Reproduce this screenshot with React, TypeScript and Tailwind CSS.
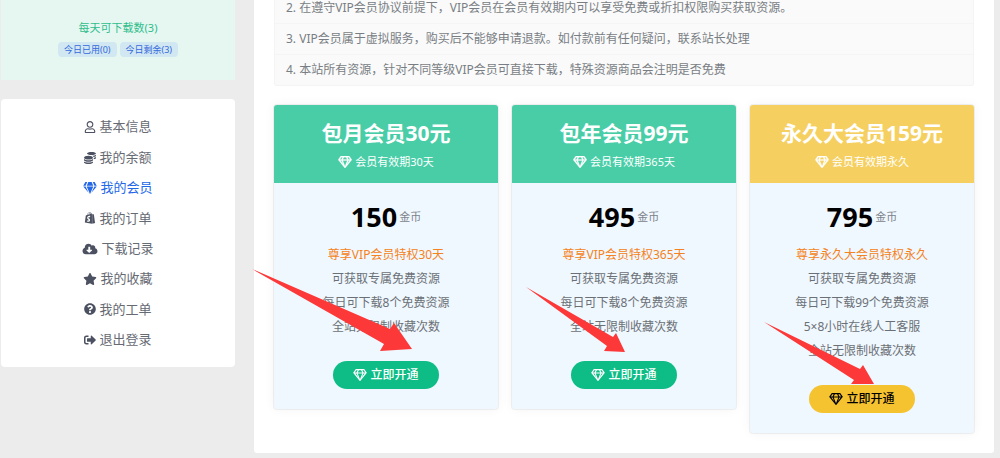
import React from "react";
import clsx from "clsx";
import { IconType } from "react-icons";
import {
  FaCloudDownloadAlt,
  FaCoins,
  FaGem,
  FaQuestionCircle,
  FaRegGem,
  FaRegUser,
  FaShopify,
  FaSignOutAlt,
  FaStar,
} from "react-icons/fa";

type Plan = {
  title: string;
  period: string;
  price: number;
  highlight: string;
  features: string[];
  gold?: boolean;
  arrow: { box: string; width: number; height: number; points: string };
};

const menu: { label: string; icon: IconType; size: string; active?: boolean }[] = [
  { label: "基本信息", icon: FaRegUser, size: "h-3 w-3" },
  { label: "我的余额", icon: FaCoins, size: "h-3 w-3" },
  { label: "我的会员", icon: FaGem, size: "h-3 w-3.5", active: true },
  { label: "我的订单", icon: FaShopify, size: "h-3 w-3" },
  { label: "下载记录", icon: FaCloudDownloadAlt, size: "h-3 w-4" },
  { label: "我的收藏", icon: FaStar, size: "h-3 w-3.5" },
  { label: "我的工单", icon: FaQuestionCircle, size: "h-3 w-3" },
  { label: "退出登录", icon: FaSignOutAlt, size: "h-3 w-3" },
];

const rules = [
  "2. 在遵守VIP会员协议前提下，VIP会员在会员有效期内可以享受免费或折扣权限购买获取资源。",
  "3. VIP会员属于虚拟服务，购买后不能够申请退款。如付款前有任何疑问，联系站长处理",
  "4. 本站所有资源，针对不同等级VIP会员可直接下载，特殊资源商品会注明是否免费",
];

const plans: Plan[] = [
  {
    title: "包月会员30元",
    period: "会员有效期30天",
    price: 150,
    highlight: "尊享VIP会员特权30天",
    features: ["可获取专属免费资源", "每日可下载8个免费资源", "全站无限制收藏次数"],
    arrow: {
      box: "-left-[22px] top-[164px]",
      width: 160,
      height: 83,
      points: "0,0 138,60 142,54 160,80 128,82 132,75",
    },
  },
  {
    title: "包年会员99元",
    period: "会员有效期365天",
    price: 495,
    highlight: "尊享VIP会员特权365天",
    features: ["可获取专属免费资源", "每日可下载8个免费资源", "全站无限制收藏次数"],
    arrow: {
      box: "left-[14px] top-[182px]",
      width: 100,
      height: 66,
      points: "0,0 87,50 90,46 99,65 78,64 81,59",
    },
  },
  {
    title: "永久大会员159元",
    period: "会员有效期永久",
    price: 795,
    highlight: "尊享永久大会员特权永久",
    features: [
      "可获取专属免费资源",
      "每日可下载99个免费资源",
      "5×8小时在线人工客服",
      "全站无限制收藏次数",
    ],
    gold: true,
    arrow: {
      box: "left-[14px] top-[217px]",
      width: 111,
      height: 63,
      points: "0,0 96,47 99,43 110,62 87,62 90,58",
    },
  },
];

function Sidebar() {
  return (
    <aside className="flex flex-col gap-[19px]">
      <div className="flex h-20 flex-col items-center bg-[#e6f7f1] pt-5">
        <p className="text-[11px] leading-4 text-[#2fbd8c]">每天可下载数(3)</p>
        <div className="mt-1.5 flex gap-[3px] text-[9px] leading-[15px] text-[#3469dc]">
          <span className="rounded-sm bg-[#d1e8f2] px-1.5">今日已用(0)</span>
          <span className="rounded-sm bg-[#d1e8f2] px-1.5">今日剩余(3)</span>
        </div>
      </div>

      <nav className="flex h-[268px] flex-col rounded-sm bg-white pt-[13px] pb-3">
        {menu.map(({ label, icon: Icon, size, active }) => (
          <a
            key={label}
            href="#"
            className={clsx(
              "flex flex-1 items-center justify-center gap-[3px] text-[13px]",
              active ? "text-[#2468e8]" : "text-[#666a73]"
            )}
          >
            <Icon className={clsx(size, !active && "text-[#4c5161]")} />
            {label}
          </a>
        ))}
      </nav>
    </aside>
  );
}

function PlanCard({ plan }: { plan: Plan }) {
  return (
    <div className="relative rounded-[3px] bg-[#f0f8ff] pb-5 text-center shadow-[0_0_12px_rgba(0,0,0,0.05)] ring-1 ring-black/5">
      <div
        className={clsx(
          "rounded-t-[3px] pt-3 pb-3 text-white",
          plan.gold ? "bg-[#f5d060]" : "bg-[#48cda7]"
        )}
      >
        <h2 className="text-[21px] leading-8 font-bold">{plan.title}</h2>
        <p className="mt-1 flex items-center justify-center gap-[3px] text-[11px] leading-[18px]">
          <FaRegGem className="h-3 w-3.5" strokeWidth={12} />
          {plan.period}
        </p>
      </div>

      <p className="mt-4 flex items-center justify-center gap-0.5">
        <strong className="text-[27px] leading-9 font-bold text-black">{plan.price}</strong>
        <span className="text-[11px] leading-4 text-[#7d838a]">金币</span>
      </p>

      <ul className="mt-2 text-xs leading-6 text-[#6b7076]">
        <li className="text-[#f58220]">{plan.highlight}</li>
        {plan.features.map((feature) => (
          <li key={feature}>{feature}</li>
        ))}
      </ul>

      <button
        type="button"
        className={clsx(
          "mt-[22px] inline-flex h-7 items-center gap-[3px] rounded-full px-5 text-xs font-medium",
          plan.gold ? "bg-[#f5c330] text-black" : "bg-[#0dbd85] text-white"
        )}
      >
        <FaRegGem className="h-3 w-3.5" />
        立即开通
      </button>

      <svg
        className={clsx("pointer-events-none absolute", plan.arrow.box)}
        width={plan.arrow.width}
        height={plan.arrow.height}
        aria-hidden="true"
      >
        <polygon points={plan.arrow.points} fill="#fd3838" />
      </svg>
    </div>
  );
}

export default function App() {
  return (
    <div className="min-h-screen bg-[#ececec] pr-1.5 pb-1.5 pl-px font-['Noto_Sans','Noto_Sans_CJK_SC',sans-serif]">
      <div className="grid grid-cols-[234px_1fr] items-start gap-[19px]">
        <Sidebar />

        <main className="rounded-b-[3px] bg-white px-5 pb-5">
          <ol className="rounded-b-[3px] border-x border-b border-[#f4f4f4] bg-[#fafafa] text-xs text-[#797e84]">
            {rules.map((rule) => (
              <li
                key={rule}
                className="border-b border-[#f5f5f5] px-[11px] py-[7px] leading-4 first:pt-0 last:border-b-0"
              >
                {rule}
              </li>
            ))}
          </ol>

          <div className="mt-[19px] grid grid-cols-3 items-start gap-3.5">
            {plans.map((plan) => (
              <PlanCard key={plan.title} plan={plan} />
            ))}
          </div>
        </main>
      </div>
    </div>
  );
}
